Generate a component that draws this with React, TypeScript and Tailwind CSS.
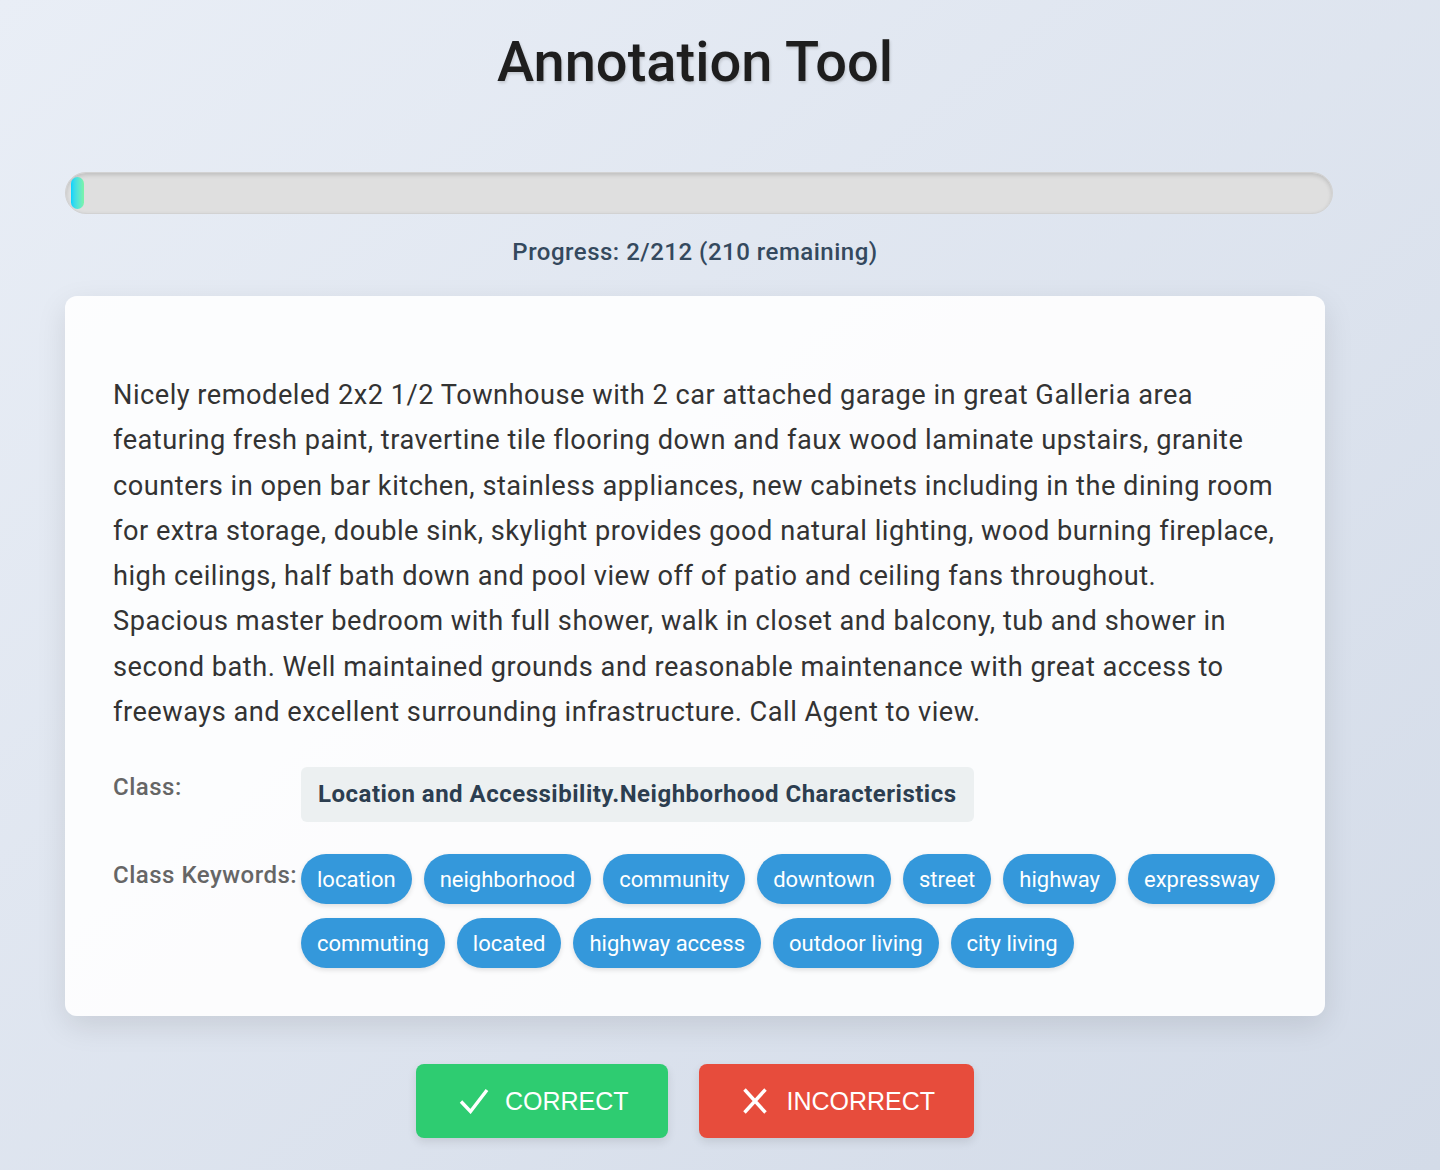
const TEXT =
  'Nicely remodeled 2x2 1/2 Townhouse with 2 car attached garage in great Galleria area featuring fresh paint, travertine tile flooring down and faux wood laminate upstairs, granite counters in open bar kitchen, stainless appliances, new cabinets including in the dining room for extra storage, double sink, skylight provides good natural lighting, wood burning fireplace, high ceilings, half bath down and pool view off of patio and ceiling fans throughout. Spacious master bedroom with full shower, walk in closet and balcony, tub and shower in second bath. Well maintained grounds and reasonable maintenance with great access to freeways and excellent surrounding infrastructure. Call Agent to view.'

const KEYWORDS = [
  'location',
  'neighborhood',
  'community',
  'downtown',
  'street',
  'highway',
  'expressway',
  'commuting',
  'located',
  'highway access',
  'outdoor living',
  'city living',
]

function CheckIcon() {
  return (
    <svg width="30" height="26" viewBox="0 0 30 26" fill="none" stroke="currentColor" strokeWidth="3.4" strokeLinecap="butt" strokeLinejoin="miter">
      <path d="M2 13.5 L11.5 23.5 L28 2" />
    </svg>
  )
}

function CrossIcon() {
  return (
    <svg width="24" height="26" viewBox="0 0 24 26" fill="none" stroke="currentColor" strokeWidth="3.4">
      <path d="M1.5 1.5 L22.5 24.5 M22.5 1.5 L1.5 24.5" />
    </svg>
  )
}

export default function App() {
  const done = 2
  const total = 212

  return (
    <div className="min-h-[1170px] w-full bg-gradient-to-br from-[#e9eef6] to-[#d3dbe8] font-['Roboto',sans-serif] tracking-[0.5px]">
      <div className="w-[1260px] ml-[65px] pt-[28px]">
        {/* Title */}
        <h1 className="text-center text-[56px] leading-[68px] font-medium tracking-normal text-[#1e1e1e] [text-shadow:1px_2px_3px_rgba(0,0,0,0.15)]">
          Annotation Tool
        </h1>

        {/* Progress bar */}
        <div className="mt-[76px] w-[1268px] h-[42px] rounded-full bg-[#dfdfdf] border border-[#d2d2d2] shadow-[inset_0_2px_4px_rgba(0,0,0,0.15)] p-[4px] pl-[5px]">
          <div
            className="h-full rounded-full bg-gradient-to-r from-[#00d2ff] to-[#7cf3a8]"
            style={{ width: `${Math.max((done / total) * 100, 1)}%` }}
          />
        </div>
        <p className="mt-[20px] text-center text-[24px] font-medium text-[#34495e]">
          Progress: {done}/{total} ({total - done} remaining)
        </p>

        {/* Card */}
        <div className="mt-[26px] rounded-[12px] bg-white/90 shadow-[0_10px_30px_rgba(0,0,0,0.1)] px-[48px] pt-[77px] pb-[48px]">
          <p className="text-[27.2px] leading-[45.3px] text-[#333]">{TEXT}</p>

          <div className="mt-[32px] flex items-start">
            <span className="w-[188px] shrink-0 pt-[2px] text-[24px] font-medium text-[#666]">Class:</span>
            <span className="rounded-[6px] bg-[#ecf0f1] px-[17px] py-[12px] text-[24px] leading-[31px] font-bold text-[#2c3e50]">
              Location and Accessibility.Neighborhood Characteristics
            </span>
          </div>

          <div className="mt-[32px] flex items-start">
            <span className="w-[188px] shrink-0 pt-[3px] text-[24px] font-medium text-[#666] whitespace-nowrap">
              Class Keywords:
            </span>
            <div className="flex flex-wrap gap-x-[12px] gap-y-[14px]">
              {KEYWORDS.map((k) => (
                <span
                  key={k}
                  className="rounded-full bg-[#3498db] px-[16px] h-[50px] flex items-center text-[22px] tracking-normal text-white shadow-[0_2px_5px_rgba(0,0,0,0.12)]"
                >
                  {k}
                </span>
              ))}
            </div>
          </div>
        </div>

        {/* Actions */}
        <div className="mt-[48px] flex justify-center gap-[31px] font-['Liberation_Sans',sans-serif] tracking-normal">
          <button className="flex items-center gap-[16px] h-[74px] pl-[43px] pr-[39px] rounded-[8px] bg-[#2ecc71] text-white text-[25px] shadow-[0_4px_10px_rgba(0,0,0,0.1)]">
            <CheckIcon />
            CORRECT
          </button>
          <button className="flex items-center gap-[20px] h-[74px] pl-[44px] pr-[39px] rounded-[8px] bg-[#e74c3c] text-white text-[25px] shadow-[0_4px_10px_rgba(0,0,0,0.1)]">
            <CrossIcon />
            INCORRECT
          </button>
        </div>
      </div>
    </div>
  )
}
